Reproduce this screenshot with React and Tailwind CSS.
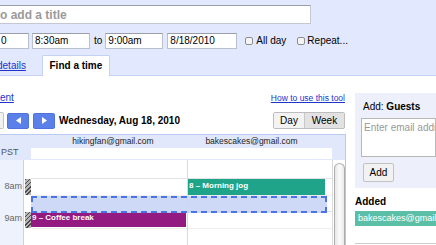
import React from "react";

function NavArrow({ dir }) {
  return (
    <div className="w-[22px] h-[16px] rounded-[2px] bg-[#5b80ea] border border-[#4f72dc] flex items-center justify-center">
      <svg width="5" height="7" viewBox="0 0 5 7">
        {dir === "left" ? (
          <polygon points="5,0 0,3.5 5,7" fill="#fff" />
        ) : (
          <polygon points="0,0 5,3.5 0,7" fill="#fff" />
        )}
      </svg>
    </div>
  );
}

function Checkbox() {
  return <div className="w-[8px] h-[8px] border border-[#8e8e8e] rounded-[2px] bg-[#f4f4f4]" />;
}

function TimeInput({ value, w, className = "" }) {
  return (
    <div
      className={`h-[16px] bg-white border border-[#b9bfcc] border-t-[#9a9ea8] flex items-center pl-[2px] text-[10px] ${w} ${className}`}
    >
      {value}
    </div>
  );
}

export default function App() {
  return (
    <div className="w-[436px] h-[245px] overflow-hidden bg-white text-black font-['Liberation_Sans',Arial,sans-serif] leading-none">
      {/* Event form */}
      <div className="h-[76px] bg-[#e2e8fd] border-b border-[#c3d1f2] pt-[5px]">
        <div className="-ml-[2px] w-[313px] h-[19px] bg-white border border-[#c4c8d2] border-t-[#9a9ea8] flex items-center pl-[1px] text-[12px] font-bold text-[#9a9a9a]">
          o add a title
        </div>

        <div className="mt-[9px] h-[16px] flex items-center">
          <TimeInput value="0" w="w-[31px]" className="-ml-[2px]" />
          <TimeInput value="8:30am" w="w-[58px]" className="ml-[3px]" />
          <span className="ml-[4px] text-[10px]">to</span>
          <TimeInput value="9:00am" w="w-[58px]" className="ml-[3px]" />
          <TimeInput value="8/18/2010" w="w-[70px]" className="ml-[4px]" />
          <div className="ml-[8px] flex items-center gap-[3px]">
            <Checkbox />
            <span className="text-[10px]">All day</span>
          </div>
          <div className="ml-[11px] flex items-center gap-[2px]">
            <Checkbox />
            <span className="text-[10px]">Repeat...</span>
          </div>
        </div>

        <div className="mt-[6px] h-[20px] flex items-end">
          <span className="-ml-[3px] self-center pt-[2px] text-[10px] text-[#2233cc] underline">details</span>
          <div className="ml-[16px] relative z-10 -mb-px w-[68px] h-[21px] bg-white border border-b-0 border-[#c3d1f2] rounded-t-[2px] flex items-center justify-center text-[10px] font-bold">
            Find a time
          </div>
        </div>
      </div>

      {/* Find a time */}
      <div className="flex">
        <div className="w-[346px] shrink-0">
          <div className="mt-[15px] h-[14px] flex items-center justify-between pr-px">
            <span className="text-[10px] text-[#2233cc] underline">ent</span>
            <span className="text-[8.5px] text-[#2233cc] underline">How to use this tool</span>
          </div>

          <div className="mt-[7px] h-[17px] flex items-center justify-between pr-px">
            <div className="flex items-center">
              <div className="w-[4px] h-[17px] bg-[#f1f1f1] border border-l-0 border-[#c4c4c4] rounded-r-[2px]" />
              <div className="ml-[3px]">
                <NavArrow dir="left" />
              </div>
              <div className="ml-[4px]">
                <NavArrow dir="right" />
              </div>
              <span className="ml-[4px] text-[10px] font-bold">Wednesday, Aug 18, 2010</span>
            </div>
            <div className="flex h-[17px] border border-[#bdbdbd] rounded-[2px] text-[10px]">
              <div className="w-[31px] bg-[#f3f3f3] border-r border-[#c8c8c8] flex items-center justify-center">Day</div>
              <div className="w-[39px] bg-[#e2e2e2] flex items-center justify-center">Week</div>
            </div>
          </div>

          {/* grid header */}
          <div className="mt-[5px] h-[26px] bg-[#e1e8fb] border-t border-r border-[#b9c9f0] flex">
            <div className="w-[31px] flex items-end pb-[3px]">
              <span className="ml-[1px] text-[9px] text-[#555]">PST</span>
            </div>
            <div className="flex flex-col">
              <div className="h-[13px] flex items-center text-[8.5px] text-[#222]">
                <div className="w-[157px] pl-[7px] text-center">hikingfan@gmail.com</div>
                <div className="w-[144px] pr-[17px] text-center">bakescakes@gmail.com</div>
              </div>
              <div className="w-[301px] h-[11px] bg-white" />
            </div>
          </div>

          {/* grid body */}
          <div className="relative h-[85px] flex">
            <div className="w-[24px] bg-[#eef2fc] border-r border-[#c6d1ee] flex flex-col text-[9px] text-[#666]">
              <div className="h-[19px]" />
              <div className="h-[33px] pt-[3px] pr-[1px] text-right">8am</div>
              <div className="h-[33px] pt-[2px] pr-[1px] text-right">9am</div>
            </div>
            <div className="w-[7px] flex flex-col pl-[1px]">
              <div className="h-[19px]" />
              <div className="h-[16px] bg-[repeating-linear-gradient(135deg,#4a4a4a_0px,#4a4a4a_1px,#b5b5b5_1px,#b5b5b5_3px)]" />
              <div className="h-[17px]" />
              <div className="h-[16px] bg-[repeating-linear-gradient(135deg,#4a4a4a_0px,#4a4a4a_1px,#b5b5b5_1px,#b5b5b5_3px)]" />
            </div>
            {[157, 145].map((w, i) => (
              <div
                key={i}
                className={`flex flex-col border-r border-[#dadada] ${i === 0 ? "w-[157px]" : "w-[145px]"}`}
              >
                <div className="h-[19px] border-b border-[#e3e3e3]" />
                <div className="h-[17px] border-b border-[#eeeeee]" />
                <div className="h-[16px] border-b border-[#e3e3e3]" />
                <div className="h-[17px] border-b border-[#eeeeee]" />
                <div className="h-[16px]" />
              </div>
            ))}
            <div className="w-[13px] pt-[3px] pl-px border-r border-[#c4c4c4]">
              <div className="h-full rounded-t-[6px] border border-b-0 border-[#adadad] bg-gradient-to-r from-[#e6e6e6] via-[#fbfbfb] to-[#e9e9e9]" />
            </div>

            {/* events */}
            <div className="absolute left-[188px] top-[19px] w-[137px] h-[16px] bg-[#1fa48a] text-white text-[8px] font-bold pl-[1px] pt-[3px]">
              8 – Morning jog
            </div>
            <div className="absolute left-[31px] top-[52px] w-[155px] h-[15px] bg-[#931a80] text-white text-[8px] font-bold pl-[1px] pt-[2px]">
              9 – Coffee break
            </div>
            <div className="absolute left-[31px] top-[36px] w-[296px] h-[17px] bg-[#c9d5f7]/90 border-2 border-dashed border-[#4a73e6]" />
          </div>
        </div>

        {/* guests panel */}
        <div className="ml-[9px] flex-1 min-w-0">
          <div className="mt-[17px] h-[95px] bg-[#edf0fa] pt-[8px] pl-[8px]">
            <div className="h-[12px] flex items-center text-[10px]">
              Add:&nbsp;<span className="font-bold">Guests</span>
            </div>
            <div className="mt-[5px] -ml-[2px] h-[39px] bg-white border border-[#b8b8b8] pl-[2px] pt-[4px] text-[10px] text-[#999] whitespace-nowrap overflow-hidden">
              Enter email addresses
            </div>
            <div className="mt-[6px] w-[31px] h-[19px] bg-[#f2f2f2] border border-[#c2c2c2] rounded-[2px] flex items-center justify-center text-[10px]">
              Add
            </div>
          </div>
          <div className="mt-[8px] h-[12px] flex items-center text-[10px] font-bold">Added</div>
          <div className="mt-[3px] h-[15px] bg-[#5bbfa8] text-white text-[9px] pl-[3px] flex items-center whitespace-nowrap overflow-hidden">
            bakescakes@gmail.com
          </div>
          <div className="mt-[17px] border-t border-[#cfcfcf]" />
        </div>
      </div>
    </div>
  );
}
